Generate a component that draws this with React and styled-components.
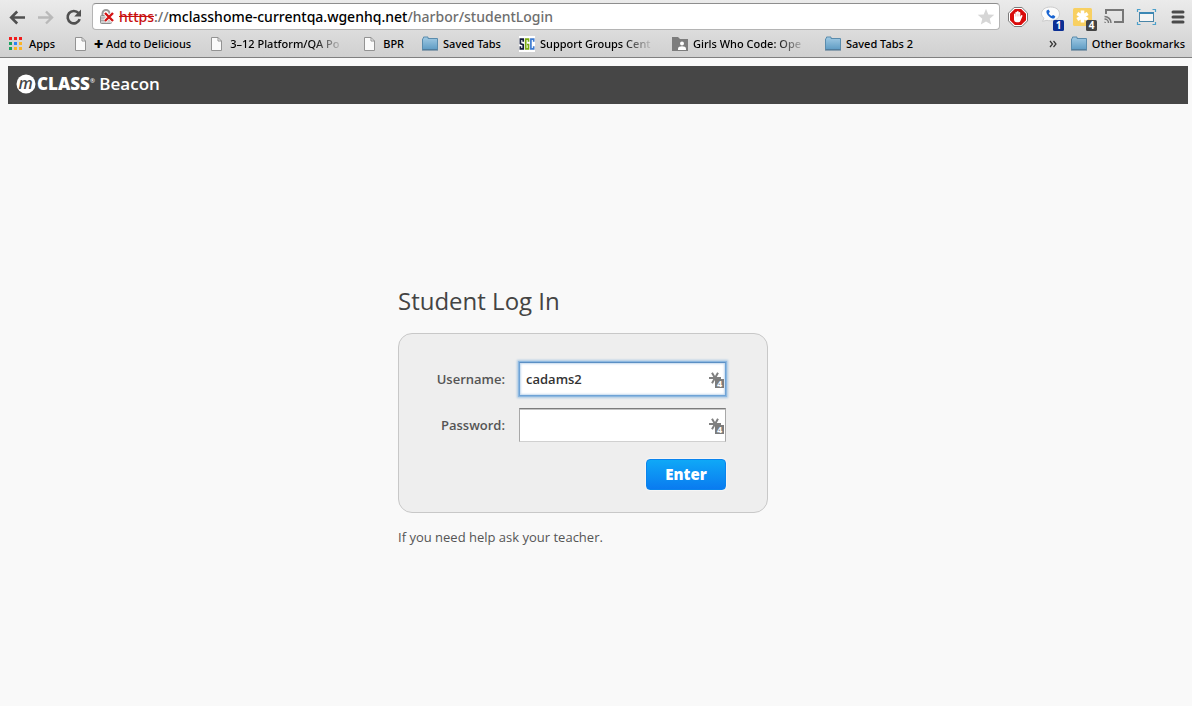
import React from 'react';
import styled, { createGlobalStyle, css } from 'styled-components';

const GlobalStyle = createGlobalStyle`
  *, *::before, *::after { box-sizing: border-box; }
  body {
    margin: 0;
    background: #f9f9f9;
    color: #444;
    font-family: "Open Sans", "Noto Sans", sans-serif;
  }
`;

/* ---------- browser chrome ---------- */

const Chrome = styled.header`
  background: linear-gradient(#ebebeb, #d0d0d0);
  border-bottom: 1px solid #808080;
  color: #000;
  font-family: "Noto Sans", sans-serif;
  font-weight: 500;
`;

const Toolbar = styled.div`
  display: flex;
  align-items: center;
  gap: 6px;
  padding: 3px 6px 0 8px;
`;

const NavButtons = styled.nav`
  display: flex;
  gap: 8px;
  width: 78px;
`;

const IconButton = styled.button`
  display: flex;
  flex: none;
  padding: 0;
  border: 0;
  background: none;
  cursor: pointer;
`;

const AddressBar = styled.div`
  display: flex;
  flex: 1;
  align-items: center;
  min-width: 0;
  height: 27px;
  padding: 0 4px 0 6px;
  gap: 4px;
  border: 1px solid #b4b4b4;
  border-top-color: #8e8e8e;
  border-radius: 4px;
  background: #fff;
`;

const Address = styled.div`
  flex: 1;
  min-width: 0;
  overflow: hidden;
  white-space: nowrap;
  font-size: 14px;
  line-height: 20px;
  color: #6e6e6e;
`;

const Scheme = styled.s`
  color: #c8100e;
`;

const Host = styled.span`
  color: #000;
`;

const Extensions = styled.div`
  display: flex;
  align-items: center;
  gap: 8px;
`;

const BookmarksBar = styled.nav`
  display: flex;
  align-items: center;
  gap: 18px;
  height: 27px;
  padding: 0 7px 0 8px;
  white-space: nowrap;
`;

const Bookmark = styled.a`
  display: flex;
  flex: none;
  align-items: center;
  gap: 5px;
  color: #000;
  font-size: 11px;
  line-height: 16px;
  text-decoration: none;
`;

const BookmarkLabel = styled.span`
  ${({ $faded }) =>
    $faded &&
    css`
      width: 114px;
      mask-image: linear-gradient(to right, #000 72%, transparent 100%);
    `}
`;

const OverflowButton = styled(IconButton)`
  margin-left: auto;
  margin-right: -4px;
  color: #333;
`;

/* ---------- page ---------- */

const Page = styled.div`
  padding: 8px 4px 8px 8px;
`;

const Banner = styled.div`
  display: flex;
  align-items: center;
  gap: 1px;
  height: 38px;
  padding: 0 8px 2px;
  background: #464646;
  color: #fff;
  font-size: 17px;
  line-height: 24px;
`;

const BrandName = styled.span`
  font-weight: 600;
`;

const BrandStrong = styled.b`
  font-weight: 800;
`;

const Registered = styled.sup`
  font-size: 6px;
  line-height: 1;
  vertical-align: 7px;
`;

const Main = styled.main`
  width: 100%;
  max-width: 400px;
  margin: 180px auto 0;
`;

const Title = styled.h1`
  margin: 0;
  font-size: 24px;
  font-weight: 400;
  line-height: 34px;
`;

const LoginForm = styled.form`
  display: flex;
  flex-direction: column;
  gap: 12px;
  max-width: 370px;
  margin-top: 15px;
  padding: 28px 41px 22px 20px;
  border: 1px solid #c8c8c8;
  border-radius: 14px;
  background: #eee;
`;

const Field = styled.div`
  display: flex;
  align-items: center;
  justify-content: flex-end;
  gap: 14px;
`;

const Label = styled.label`
  color: #555;
  font-size: 13px;
  font-weight: 600;
`;

const InputWrap = styled.div`
  position: relative;
  width: 207px;
`;

const TextInput = styled.input`
  display: block;
  width: 100%;
  height: 34px;
  padding: 0 24px 0 6px;
  border: 1px solid #d0d0d0;
  border-top-color: #7c7c7c;
  border-left-color: #a8a8a8;
  border-right-color: #a8a8a8;
  border-radius: 0;
  outline: none;
  background: #fff;
  box-shadow: inset 0 1px 0 #c4c4c4;
  color: #333;
  font: 600 13px/20px "Open Sans", sans-serif;
  ${({ $active }) =>
    $active &&
    css`
      border-color: #6fa3d6;
      border-top-color: #5b8fc4;
      box-shadow: 0 0 0 1px #8db8e0, 0 0 2px 2px #a9c8e4, inset 0 0 2px 1px #c4d9ee;
    `}
`;

const FillButton = styled(IconButton)`
  position: absolute;
  top: 9px;
  right: 1px;
`;

const Actions = styled.div`
  display: flex;
  justify-content: flex-end;
  padding-top: 5px;
`;

const SubmitButton = styled.button`
  width: 80px;
  height: 31px;
  padding: 0 0 2px;
  border: 1px solid #0a84ee;
  border-radius: 4px;
  background: linear-gradient(#0fa8f7, #0a7bf0);
  box-shadow: 0 0 1px 1px #f6f6f6;
  color: #fff;
  font: 800 15px/20px "Open Sans", sans-serif;
`;

const Help = styled.p`
  margin: 14px 0 0;
  color: #555;
  font-size: 13px;
  line-height: 20px;
`;

/* ---------- icons ---------- */

const Back = ({ color }) => (
  <svg width="20" height="20" viewBox="0 0 20 20" fill="none" stroke={color} strokeWidth="2.6">
    <path d="M17 10.5H4M9.2 4.5 3.2 10.5l6 6" />
  </svg>
);

const Forward = () => (
  <svg width="20" height="20" viewBox="0 0 20 20" fill="none" stroke="#b9b9b9" strokeWidth="2.4">
    <path d="M2 10.5h13M10 4.5l6 6-6 6" />
  </svg>
);

const Reload = () => (
  <svg width="20" height="20" viewBox="0 0 20 20">
    <path d="M14.6 6.2A6.2 6.2 0 1 0 15.7 12.2" fill="none" stroke="#505050" strokeWidth="2.6" />
    <path d="M17 2.6v6.8h-6.8z" fill="#505050" />
  </svg>
);

const BrokenLock = () => (
  <svg width="16" height="18" viewBox="0 0 16 18">
    <path d="M3.5 8V5.5a3.5 3.5 0 0 1 7 0V8" fill="none" stroke="#999" strokeWidth="2" />
    <rect x="1.5" y="7.5" width="11" height="8" rx="1" fill="#cfcfcf" stroke="#8d8d8d" />
    <path d="M2 10h10M2 12.5h10" stroke="#aaa" />
    <path d="m6 5 8 8M14 5l-8 8" stroke="#fff" strokeWidth="4" />
    <path d="m6 5 8 8M14 5l-8 8" stroke="#d31313" strokeWidth="2.4" />
  </svg>
);

const Star = () => (
  <svg width="18" height="18" viewBox="0 0 18 18">
    <path d="m9 .8 2.300 5.600 6 .4-4.600 3.900 1.500 5.900L9 13.400l-5.200 3.200 1.500-5.900L.7 6.800l6-.4z" fill="#d6d6d6" />
  </svg>
);

const StopHand = () => (
  <svg width="24" height="24" viewBox="0 0 24 24">
    <path d="M8.100 2.500h7.800l5.600 5.600v7.800l-5.600 5.600H8.100l-5.600-5.600V8.100z" fill="#fff" stroke="#7a7a7a" />
    <path d="M8.800 4h6.400L20 8.800v6.400L15.200 20H8.800L4 15.200V8.800z" fill="#d90b0b" />
    <path d="M8 9.200c0-1 1.400-1 1.400 0V7.600c0-1.100 1.600-1.100 1.600 0V7c0-1.200 1.700-1.200 1.700 0v.8c0-1.100 1.600-1.100 1.600 0v4l.8-1.300c.6-.8 1.700-.3 1.300.7l-2 4.800c-.4.800-1 1.200-1.800 1.200h-2C9 17.200 8 16 8 14.500z" fill="#fff" />
    <path d="M9.600 9v2.500M11.200 8.500v3M12.900 8.500v3" stroke="#e89a9a" strokeWidth=".5" />
  </svg>
);

const Voice = () => (
  <svg width="24" height="24" viewBox="-2 0 24 24" overflow="visible">
    <path d="M10.500 2c5.500 0 9 2.800 9 6.800s-3.500 7-9 7c-1.300 0-2.500-.2-3.500-.5l-4.500 1 1.500-3C2.500 12 1.500 10.500 1.500 8.800c0-4 3.500-6.800 9-6.800z" fill="#fbfbfb" stroke="#ccc" />
    <path d="M6.500 5.700 8.300 4.500c.9.700 1.400 1.500 1.600 2.500L8.700 8.100c.6 1.400 1.600 2.300 3 2.900l1.300-1.100c1.100.3 1.900.9 2.400 1.900l-1.300 1.600c-1.100.5-3.300-.2-5-1.900C7.200 9.700 6 7.500 6.500 5.700z" fill="#1763d1" />
    <rect x="13" y="15" width="11" height="11" rx="1.500" fill="#0b2f94" />
    <text x="18.500" y="24" textAnchor="middle" fill="#fff" fontSize="10" fontWeight="700" fontFamily="Open Sans">1</text>
  </svg>
);

const PasswordManager = () => (
  <svg width="24" height="24" viewBox="-2 0 24 24" overflow="visible">
    <rect x="1" y="3" width="19" height="18" rx="1.500" fill="#f8d062" />
    <path d="M10.500 5.500v12M5.300 8.500l10.400 6M15.700 8.500l-10.400 6" stroke="#fff" strokeWidth="3.600" />
    <rect x="14" y="15" width="11" height="11" rx="1.500" fill="#444" />
    <text x="19.500" y="24" textAnchor="middle" fill="#fff" fontSize="10" fontWeight="700" fontFamily="Open Sans">4</text>
  </svg>
);

const Cast = () => (
  <svg width="24" height="24" viewBox="0 0 24 24" fill="none" stroke="#777">
    <path d="M4 9V5h17v12h-9" strokeWidth="2" />
    <path d="M2.500 11.500a6.500 6.500 0 0 1 6.500 6.500M2.500 14a4 4 0 0 1 4 4" strokeWidth="1.500" />
    <path d="M2.500 16.500A1.500 1.500 0 0 1 4 18H2.500z" fill="#777" stroke="none" />
  </svg>
);

const WindowResize = () => (
  <svg width="24" height="24" viewBox="0 0 24 24">
    <path d="M3.500 7V4.500H6.500M18.500 4.500h3V7M21.500 17v2.500h-3M6.500 19.500h-3V17" fill="none" stroke="#4ba0cb" strokeWidth="1.200" />
    <rect x="5.500" y="7.500" width="14" height="9" fill="#f5f5f5" stroke="#4a86a8" />
    <path d="M5 8h15" stroke="#3c87b4" strokeWidth="2" />
  </svg>
);

const Menu = () => (
  <svg width="20" height="16" viewBox="0 0 20 16" stroke="#4a4a4a" strokeWidth="3" strokeLinecap="round">
    <path d="M7 3h10M7 8h10M7 13h10" />
  </svg>
);

const appColors = ['#f01c1c', '#f01c1c', '#f01c1c', '#1aa15f', '#2b83f5', '#fbb424', '#1aa15f', '#fbb424', '#fbb424'];

const Apps = () => (
  <svg width="16" height="16" viewBox="0 0 16 16">
    {appColors.map((fill, i) => (
      <rect key={i} x={1 + (i % 3) * 5} y={1 + Math.floor(i / 3) * 5} width="3" height="3" fill={fill} />
    ))}
  </svg>
);

const PageIcon = () => (
  <svg width="16" height="16" viewBox="0 0 16 16">
    <path d="M2.500 1.500h6.500l3.500 3.500v9.500h-10z" fill="#fafafa" stroke="#939393" />
    <path d="M9 1.500V5h3.500" fill="none" stroke="#939393" />
  </svg>
);

const Folder = () => (
  <svg width="16" height="16" viewBox="0 0 16 16">
    <defs>
      <linearGradient id="folder" x2="0" y2="1">
        <stop stopColor="#a2cbe4" />
        <stop offset="1" stopColor="#5f9cc4" />
      </linearGradient>
    </defs>
    <path d="M.5 13.500V3l1-1V1h4.500v1.500h9.500v11z" fill="url(#folder)" stroke="#5a8cad" />
    <path d="M0 14h16" stroke="#466f8c" />
  </svg>
);

const Sgc = () => (
  <svg width="16" height="16" viewBox="0 0 16 16" fill="none" strokeWidth="1.700">
    <path fill="#fff" d="M0 0h16v16H0z" />
    <path d="M4.200 5.800V3.200H1.400v4.500l2.800 1v4.100H1.400v-2.600" stroke="#151d3c" />
    <path d="M9.500 5.800V3.200H6.700v9.600h2.800V8.500H8" stroke="#7bab12" />
    <path d="M14.700 5.800V3.200h-2.800v9.600h2.800v-2.600" stroke="#3e7bd0" />
  </svg>
);

const PersonFolder = () => (
  <svg width="16" height="16" viewBox="0 0 16 16">
    <path d="M0 1h6l2 2h8v12H0z" fill="#7d7d7d" />
    <circle cx="10" cy="7.500" r="2" fill="#fff" />
    <path d="M6 14v-1.500c0-1.300 2-2.200 4-2.200s4 .9 4 2.200V14z" fill="#fff" />
  </svg>
);

const Chevrons = () => (
  <svg width="8" height="10" viewBox="0 0 8 10" fill="none" stroke="#333" strokeWidth="1.200">
    <path d="m1 2 2.500 3L1 8M4.500 2 7 5 4.500 8" />
  </svg>
);

const BrandMark = () => (
  <svg width="20" height="20" viewBox="0 0 20 20" overflow="visible">
    <circle cx="10" cy="10" r="9.500" fill="#fff" />
    <text x="9.500" y="14.500" textAnchor="middle" fill="#464646" fontSize="16" fontWeight="600" fontStyle="italic" fontFamily="Open Sans">m</text>
  </svg>
);

const FillIcon = () => (
  <svg width="16" height="18" viewBox="0 0 16 18">
    <path d="M0 7h12M3 1.800l6 10.400M9 1.800 3 12.200" stroke="#808080" strokeWidth="2" />
    <rect x="6" y="8" width="9" height="9" fill="#7c7c7c" />
    <text x="10.500" y="16" textAnchor="middle" fill="#fff" fontSize="9" fontWeight="700" fontFamily="Open Sans">4</text>
  </svg>
);

/* ---------- content ---------- */

const bookmarks = [
  { label: 'Apps', Icon: Apps },
  { label: '✚ Add to Delicious', Icon: PageIcon },
  { label: '3–12 Platform/QA Po', Icon: PageIcon, faded: true },
  { label: 'BPR', Icon: PageIcon },
  { label: 'Saved Tabs', Icon: Folder },
  { label: 'Support Groups Cent', Icon: Sgc, faded: true },
  { label: 'Girls Who Code: Ope', Icon: PersonFolder, faded: true },
  { label: 'Saved Tabs 2', Icon: Folder },
];

const extensions = [
  ['Ad blocker', StopHand],
  ['Voice calls', Voice],
  ['Password manager', PasswordManager],
  ['Cast', Cast],
  ['Window resizer', WindowResize],
  ['Menu', Menu],
];

function BookmarkItem({ label, Icon, faded }) {
  return (
    <Bookmark href="#">
      <Icon />
      <BookmarkLabel $faded={faded}>{label}</BookmarkLabel>
    </Bookmark>
  );
}

function CredentialField({ id, label, active, ...input }) {
  return (
    <Field>
      <Label htmlFor={id}>{label}</Label>
      <InputWrap>
        <TextInput id={id} name={id} $active={active} {...input} />
        <FillButton type="button" aria-label={`Fill ${id}`}>
          <FillIcon />
        </FillButton>
      </InputWrap>
    </Field>
  );
}

export default function App() {
  return (
    <>
      <GlobalStyle />
      <Chrome>
        <Toolbar>
          <NavButtons aria-label="History">
            <IconButton aria-label="Back"><Back color="#505050" /></IconButton>
            <IconButton aria-label="Forward"><Forward /></IconButton>
            <IconButton aria-label="Reload"><Reload /></IconButton>
          </NavButtons>
          <AddressBar>
            <BrokenLock />
            <Address role="textbox" aria-label="Address" tabIndex={0}>
              <Scheme>https</Scheme>://<Host>mclasshome-currentqa.wgenhq.net</Host>/harbor/studentLogin
            </Address>
            <IconButton aria-label="Bookmark this page"><Star /></IconButton>
          </AddressBar>
          <Extensions>
            {extensions.map(([name, Icon]) => (
              <IconButton key={name} aria-label={name}><Icon /></IconButton>
            ))}
          </Extensions>
        </Toolbar>
        <BookmarksBar aria-label="Bookmarks">
          {bookmarks.map((b) => <BookmarkItem key={b.label} {...b} />)}
          <OverflowButton aria-label="More bookmarks"><Chevrons /></OverflowButton>
          <BookmarkItem label="Other Bookmarks" Icon={Folder} />
        </BookmarksBar>
      </Chrome>
      <Page>
        <Banner>
          <BrandMark />
          <BrandName>
            <BrandStrong>CLASS</BrandStrong><Registered>®</Registered> Beacon
          </BrandName>
        </Banner>
        <Main>
          <Title>Student Log In</Title>
          <LoginForm onSubmit={(e) => e.preventDefault()}>
            <CredentialField id="username" label="Username:" type="text" defaultValue="cadams2" active />
            <CredentialField id="password" label="Password:" type="password" />
            <Actions>
              <SubmitButton type="submit">Enter</SubmitButton>
            </Actions>
          </LoginForm>
          <Help>If you need help ask your teacher.</Help>
        </Main>
      </Page>
    </>
  );
}
